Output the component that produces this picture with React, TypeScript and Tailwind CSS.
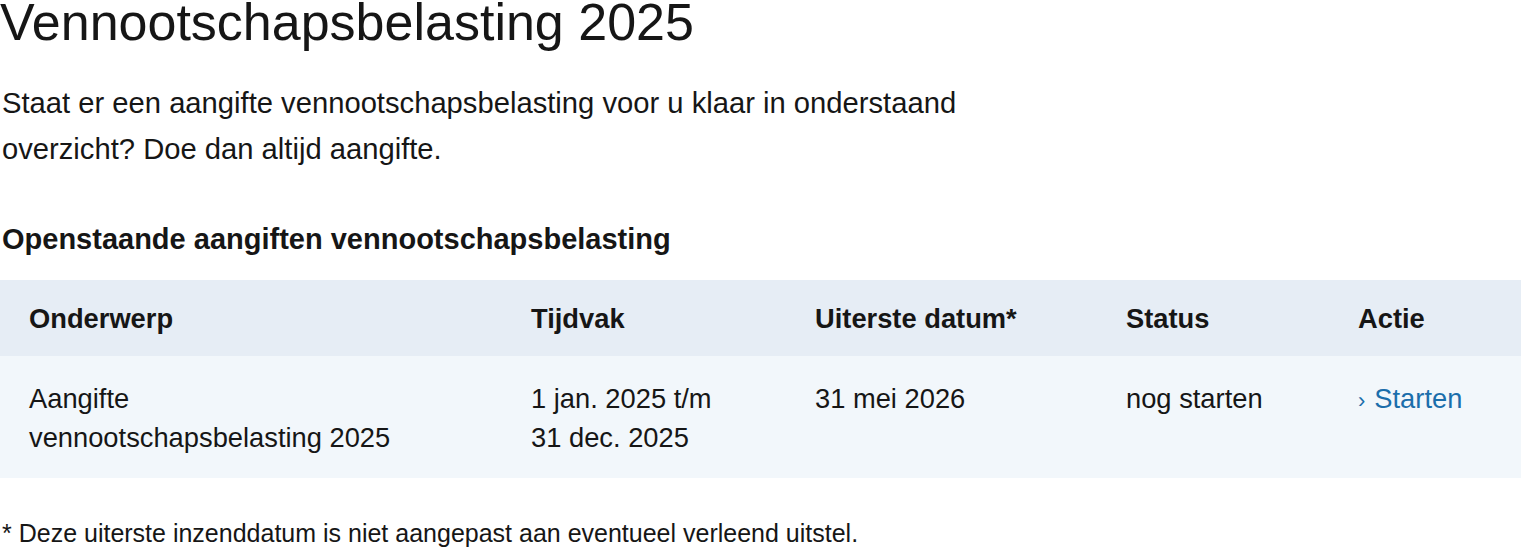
import React from 'react';

const font = { fontFamily: '"Liberation Sans", Arial, Helvetica, sans-serif' };

interface Aangifte {
  onderwerp: string[];
  tijdvak: string[];
  uiterste: string;
  status: string;
  actie: string;
}

const aangiften: Aangifte[] = [
  {
    onderwerp: ['Aangifte', 'vennootschapsbelasting 2025'],
    tijdvak: ['1 jan. 2025 t/m', '31 dec. 2025'],
    uiterste: '31 mei 2026',
    status: 'nog starten',
    actie: 'Starten',
  },
];

const cols = 'grid grid-cols-[502px_285px_311px_232px_1fr]';

export default function App() {
  return (
    <div className="min-h-screen bg-white text-[#161616]" style={font}>
      <h1 className="text-[52px] leading-[44px] font-normal">Vennootschapsbelasting 2025</h1>

      <p className="mt-[36px] pl-[2px] text-[29.2px] leading-[46px] max-w-[980px]">
        Staat er een aangifte vennootschapsbelasting voor u klaar in onderstaand overzicht? Doe dan altijd
        aangifte.
      </p>

      <h2 className="mt-[49px] pl-[2px] text-[29px] leading-[36px] font-bold">
        Openstaande aangiften vennootschapsbelasting
      </h2>

      <div className="mt-[23px] text-[27.3px] leading-[39px]">
        <div className={`${cols} bg-[#e6edf5] font-bold pt-[19px] pb-[18px]`}>
          <div className="pl-[29px]">Onderwerp</div>
          <div className="pl-[29px]">Tijdvak</div>
          <div className="pl-[28px]">Uiterste datum*</div>
          <div className="pl-[28px]">Status</div>
          <div className="pl-[28px]">Actie</div>
        </div>
        {aangiften.map((a, i) => (
          <div key={i} className={`${cols} bg-[#f2f7fb] pt-[23px] pb-[21px]`}>
            <div className="pl-[29px]">
              {a.onderwerp.map((l) => (
                <div key={l}>{l}</div>
              ))}
            </div>
            <div className="pl-[29px]">
              {a.tijdvak.map((l) => (
                <div key={l}>{l}</div>
              ))}
            </div>
            <div className="pl-[28px]">{a.uiterste}</div>
            <div className="pl-[28px]">{a.status}</div>
            <div className="pl-[28px]">
              <a href="#" className="text-[#1b6eab] no-underline">
                <span className="text-[22px] mr-[9px]">›</span>
                {a.actie}
              </a>
            </div>
          </div>
        ))}
      </div>

      <p className="mt-[37px] pl-[2px] text-[25px] leading-[36px]">
        * Deze uiterste inzenddatum is niet aangepast aan eventueel verleend uitstel.
      </p>
    </div>
  );
}
